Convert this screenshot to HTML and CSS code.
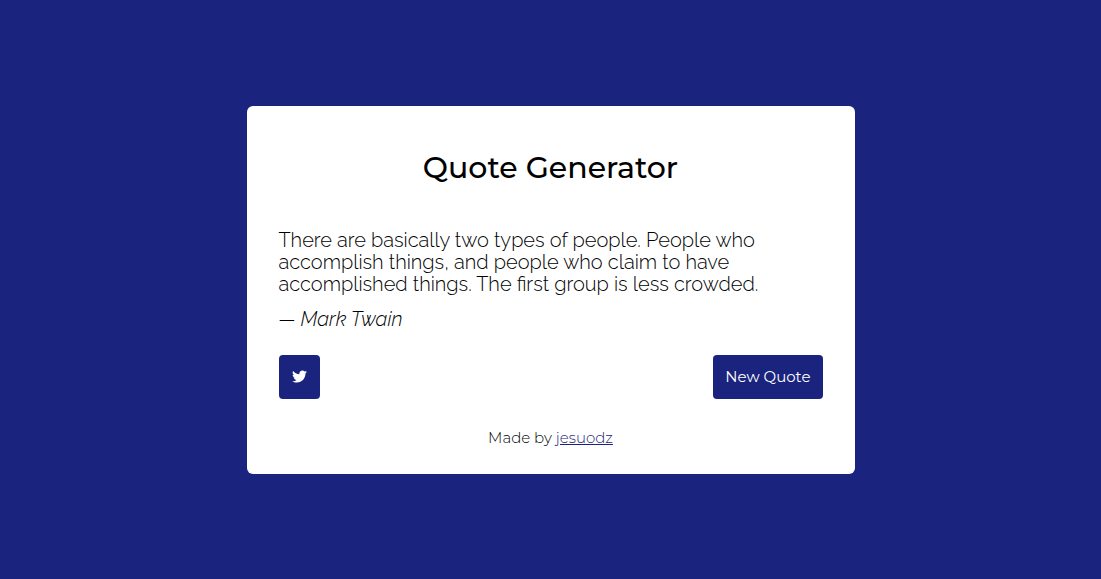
FILE: index.html
```html
<!DOCTYPE html>
<html lang="en">
<head>
<meta charset="utf-8">
<meta name="viewport" content="width=device-width, initial-scale=1">
<title>Quote Generator</title>
<link rel="stylesheet" href="styles.css">
</head>
<body>
<main class="card">
  <h1 class="title">Quote Generator</h1>
  <blockquote class="quote">
    <p class="quote-text">There are basically two types of people. People who accomplish things, and people who claim to have accomplished things. The first group is less crowded.</p>
    <footer class="author">— <cite>Mark Twain</cite></footer>
  </blockquote>
  <div class="actions">
    <a class="btn btn-icon" href="#" aria-label="Tweet this quote">
      <svg class="icon" viewBox="0 0 512 512" aria-hidden="true"><path fill="currentColor" d="M459.37 151.716c.325 4.548.325 9.097.325 13.645 0 138.72-105.583 298.558-298.558 298.558-59.452 0-114.68-17.219-161.137-47.106 8.447.974 16.568 1.299 25.34 1.299 49.055 0 94.213-16.568 130.274-44.832-46.132-.975-84.792-31.188-98.112-72.772 6.498.974 12.995 1.624 19.818 1.624 9.421 0 18.843-1.3 27.614-3.573-48.081-9.747-84.143-51.98-84.143-102.985v-1.299c13.969 7.797 30.214 12.67 47.431 13.319-28.264-18.843-46.781-51.005-46.781-87.391 0-19.492 5.197-37.36 14.294-52.954 51.655 63.675 129.3 105.258 216.365 109.807-1.624-7.797-2.599-15.918-2.599-24.04 0-57.828 46.782-104.934 104.934-104.934 30.213 0 57.502 12.67 76.67 33.137 23.715-4.548 46.456-13.32 66.599-25.34-7.798 24.366-24.366 44.833-46.132 57.827 21.117-2.273 41.584-8.122 60.426-16.243-14.292 20.791-32.161 39.308-52.628 54.253z"/></svg>
    </a>
    <button class="btn" type="button">New Quote</button>
  </div>
  <p class="credit">Made by <a class="credit-link" href="#">jesuodz</a></p>
</main>
</body>
</html>
```
FILE: styles.css
```css
* { box-sizing: border-box; }
body {
  margin: 0;
  min-height: 100vh;
  display: flex;
  align-items: center;
  justify-content: center;
  background: #1a237e;
  color: #000;
  font-family: Montserrat, "Open Sans", sans-serif;
}
.card {
  width: 92%;
  max-width: 608px;
  padding: 32px 32px 26px;
  border-radius: 6px;
  background: #fff;
}
.title {
  margin: 12px 0 43px;
  font-size: 30px;
  line-height: 36px;
  font-weight: 500;
  text-align: center;
}
.quote {
  margin: 0 0 25px;
  font-family: Raleway, "Open Sans", sans-serif;
  font-size: 20px;
  font-weight: 300;
  line-height: 22px;
}
.quote-text { margin: 0 0 13px; }
.author { font-style: italic; }
.actions {
  display: flex;
  justify-content: space-between;
  margin-bottom: 29px;
}
.btn {
  display: flex;
  align-items: center;
  height: 44px;
  padding: 0 12px;
  border: 0;
  border-radius: 4px;
  background: #1a237e;
  color: #fff;
  font: 15px/20px Montserrat, "Open Sans", sans-serif;
}
.btn-icon { padding: 0 13px; }
.icon { width: 15px; height: 15px; }
.credit {
  margin: 0;
  font-size: 15px;
  font-weight: 300;
  line-height: 20px;
  text-align: center;
}
.credit-link { color: #1a237e; }
```
